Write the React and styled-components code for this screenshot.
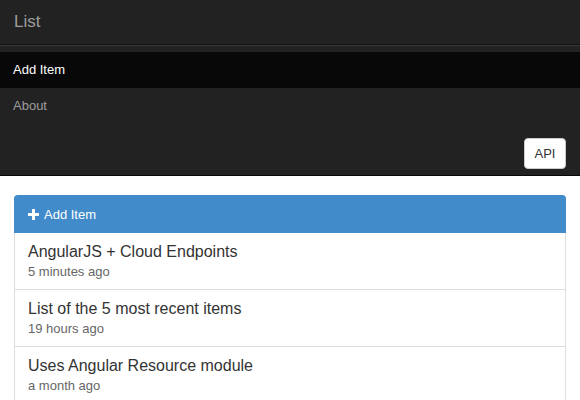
import React from 'react';
import styled, { createGlobalStyle } from 'styled-components';

const GlobalStyle = createGlobalStyle`
    body {
        margin: 0;
        background: #fff;
        font-family: "Liberation Sans", Arial, Helvetica, sans-serif;
        color: #333;
    }
`;

const Navbar = styled.nav`
    background: #222;
    border-bottom: 1px solid #080808;
`;

const Header = styled.div`
    height: 44px;
    display: flex;
    align-items: center;
    padding: 0 14px;
`;

const Brand = styled.a`
    font-size: 17px;
    color: #9d9d9d;
    text-decoration: none;
`;

const Collapse = styled.div`
    border-top: 1px solid #101010;
    box-shadow: inset 0 1px 0 rgba(255, 255, 255, 0.1);
    padding-top: 7px;
`;

const NavList = styled.ul`
    list-style: none;
    margin: 0;
    padding: 0;
`;

const NavLink = styled.a`
    display: block;
    height: 36px;
    line-height: 36px;
    padding: 0 13px;
    font-size: 13px;
    text-decoration: none;
    color: ${(p) => (p.$active ? '#fff' : '#9d9d9d')};
    background: ${(p) => (p.$active ? '#080808' : 'transparent')};
`;

const FormRow = styled.div`
    display: flex;
    justify-content: flex-end;
    padding: 14px 14px 6px;
`;

const ApiButton = styled.button`
    height: 31px;
    width: 42px;
    padding: 0;
    background: #fff;
    border: 1px solid #ccc;
    border-radius: 4px;
    font-family: inherit;
    font-size: 13px;
    color: #333;
`;

const Content = styled.main`
    padding: 19px 14px 0;
`;

const Panel = styled.section`
    border: 1px solid #ddd;
    border-top: none;
    border-radius: 4px 4px 0 0;
`;

const PanelHeading = styled.div`
    display: flex;
    align-items: center;
    gap: 5px;
    height: 38px;
    padding: 0 14px;
    margin: 0 -1px;
    background: #428bca;
    border-radius: 4px 4px 0 0;
    color: #fff;
    font-size: 13px;
`;

const Item = styled.div`
    padding: 8px 13px;
    border-bottom: 1px solid #ddd;
`;

const ItemTitle = styled.div`
    font-size: 16px;
    line-height: 22px;
    color: #333;
`;

const ItemTime = styled.div`
    font-size: 13px;
    line-height: 18px;
    color: #666;
`;

const PlusIcon = () => (
    <svg width="11" height="11" viewBox="0 0 11 11">
        <path d="M4 0h3v4h4v3H7v4H4V7H0V4h4z" fill="#fff" />
    </svg>
);

const items = [
    { title: 'AngularJS + Cloud Endpoints', time: '5 minutes ago' },
    { title: 'List of the 5 most recent items', time: '19 hours ago' },
    { title: 'Uses Angular Resource module', time: 'a month ago' },
];

const App = () => {
    return (
        <>
            <GlobalStyle />
            <Navbar>
                <Header>
                    <Brand href="#">List</Brand>
                </Header>
                <Collapse>
                    <NavList>
                        <li><NavLink href="#" $active>Add Item</NavLink></li>
                        <li><NavLink href="#">About</NavLink></li>
                    </NavList>
                    <FormRow>
                        <ApiButton>API</ApiButton>
                    </FormRow>
                </Collapse>
            </Navbar>
            <Content>
                <Panel>
                    <PanelHeading>
                        <PlusIcon />
                        Add Item
                    </PanelHeading>
                    {items.map((item) => (
                        <Item key={item.title}>
                            <ItemTitle>{item.title}</ItemTitle>
                            <ItemTime>{item.time}</ItemTime>
                        </Item>
                    ))}
                </Panel>
            </Content>
        </>
    );
};

export default App;
